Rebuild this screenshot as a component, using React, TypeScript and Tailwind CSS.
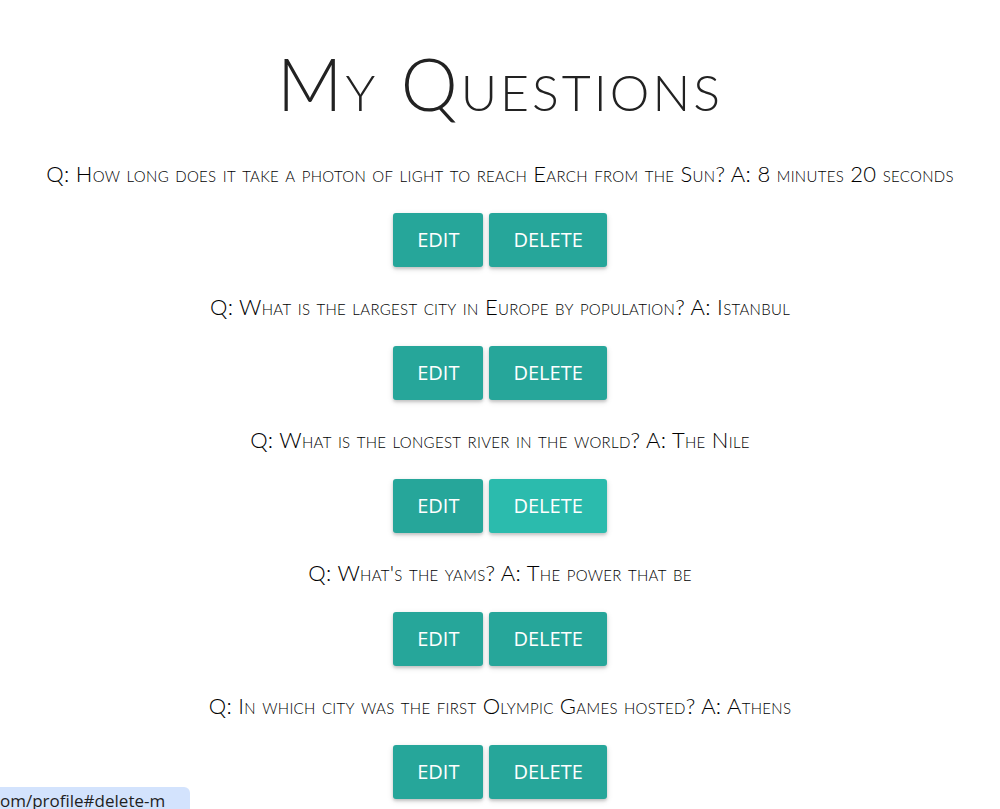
import React from "react";

const items = [
  { q: "How long does it take a photon of light to reach Earch from the Sun?", a: "8 minutes 20 seconds" },
  { q: "What is the largest city in Europe by population?", a: "Istanbul" },
  { q: "What is the longest river in the world?", a: "The Nile" },
  { q: "What's the yams?", a: "The power that be" },
  { q: "In which city was the first Olympic Games hosted?", a: "Athens" },
];

function Btn({ label, hover }: { label: string; hover?: boolean }) {
  return (
    <button
      className={
        "h-[54px] px-[24px] rounded-[3px] text-white text-[20px] uppercase shadow-[0_2px_3px_0_rgba(0,0,0,0.16),0_2px_6px_0_rgba(0,0,0,0.12)] " +
        (hover ? "bg-[#2bbbad]" : "bg-[#26a69a]")
      }
      style={{ fontFamily: "'Open Sans', sans-serif" }}
    >
      {label}
    </button>
  );
}

export default function App() {
  return (
    <div className="min-h-[809px] bg-white text-[#222] relative overflow-hidden">
      <div className="flex flex-col items-center pt-[43px]" style={{ fontFamily: "Lato, sans-serif", fontVariant: "small-caps" }}>
        <h1 className="text-[72px] leading-[80px] font-light tracking-[3px] mb-[36px]">My Questions</h1>
        {items.map((it, i) => (
          <div key={i} className="flex flex-col items-center">
            <p className="text-[22px] leading-[30px] h-[30px] mb-[24px] font-light text-black tracking-[0.3px] whitespace-nowrap">
              Q: {it.q} A: {it.a}
            </p>
            <div className="flex gap-[6px] mb-[25px]">
              <Btn label="Edit" />
              <Btn label="Delete" hover={i === 2} />
            </div>
          </div>
        ))}
      </div>
      <div
        className="fixed left-0 bottom-0 h-[22px] w-[190px] bg-[#d3e3fd] rounded-tr-[6px] text-[#1f1f1f] text-[17px] leading-[20px] pt-[4px] overflow-hidden whitespace-nowrap"
        style={{ fontFamily: "'Open Sans', sans-serif" }}
      >
        om/profile#delete-m
      </div>
    </div>
  );
}
